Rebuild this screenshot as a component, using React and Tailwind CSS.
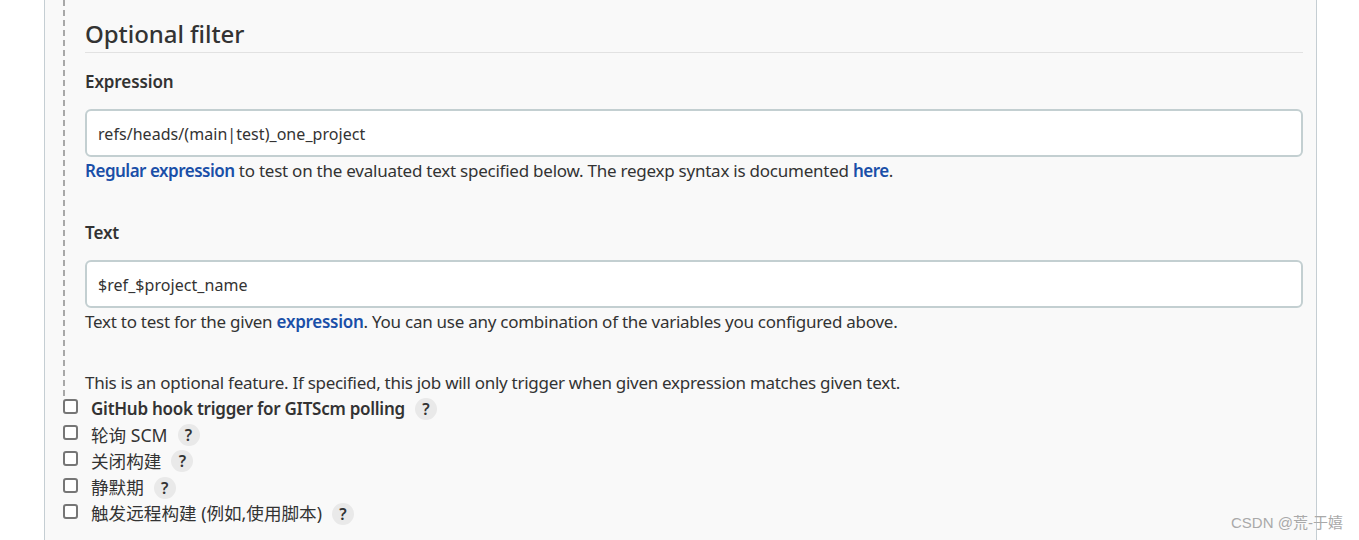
const font = { fontFamily: '"Noto Sans", "Noto Sans CJK SC", sans-serif' };

function HelpBadge() {
  return (
    <span className="ml-[10px] flex h-[22px] w-[22px] items-center justify-center rounded-full bg-[#e9e9e9] text-[16px] font-semibold text-[#333]">?</span>
  );
}

function TriggerRow({ label, bold }) {
  return (
    <div className="flex h-[26.2px] items-center">
      <input type="checkbox" className="mb-[5px] h-[15px] w-[15px] appearance-none rounded-[3px] border-2 border-[#767676] bg-white" />
      <span className={`ml-[13px] text-[#333] ${bold ? "text-[17px] font-semibold tracking-[-0.26px]" : "mb-[1px] text-[17.6px]"}`}>{label}</span>
      <HelpBadge />
    </div>
  );
}

function Field({ label, value, children, helpClass }) {
  return (
    <div>
      <div className="flex h-[20px] items-center text-[17px] font-semibold tracking-[-0.1px] text-[#333]">{label}</div>
      <div className="mt-[17px] flex h-[48px] items-center rounded-[6px] border-2 border-[#c3cfd1] bg-white pl-[11px] pt-[2px] text-[16px] tracking-[0.05px] text-[#333]">{value}</div>
      <div className={`mt-[4px] flex h-[20px] items-center text-[17px] text-[#333] ${helpClass}`}>
        <span>{children}</span>
      </div>
    </div>
  );
}

export default function App() {
  return (
    <div className="relative h-[540px] w-[1359px] overflow-hidden bg-white" style={font}>
      <div className="ml-[44px] h-full w-[1273px] border-x border-[#c5ced3] bg-[#f9f9f9] pl-[18px] pr-[13px]">
        <div className="h-[396px] border-l-2 border-dashed border-[#a8a8a8] pl-[20px]">
          <div className="flex h-[53px] items-end border-b border-[#e2e2e2] text-[24px] font-medium leading-[36px] tracking-[-0.05px] text-[#333]">Optional filter</div>
          <div className="h-[19px]" />
          <Field label="Expression" value="refs/heads/(main|test)_one_project" helpClass="tracking-[-0.24px]">
            <a className="font-semibold tracking-[-0.5px] text-[#1a4fa8]">Regular expression</a> to test on the evaluated text specified below. The regexp syntax is documented <a className="font-semibold tracking-[-0.5px] text-[#1a4fa8]">here</a>.
          </Field>
          <div className="h-[42px]" />
          <Field label="Text" value="$ref_$project_name" helpClass="tracking-[-0.26px]">
            Text to test for the given <a className="font-semibold text-[#1a4fa8]">expression</a>. You can use any combination of the variables you configured above.
          </Field>
          <div className="mt-[41px] flex h-[20px] items-center text-[17px] tracking-[-0.28px] text-[#333]">This is an optional feature. If specified, this job will only trigger when given expression matches given text.</div>
        </div>
        <TriggerRow label="GitHub hook trigger for GITScm polling" bold />
        <TriggerRow label="轮询 SCM" />
        <TriggerRow label="关闭构建" />
        <TriggerRow label="静默期" />
        <TriggerRow label="触发远程构建 (例如,使用脚本)" />
      </div>
      <div className="absolute left-[1231px] top-[513px] text-[15px] leading-[20px] text-[#a9a9a9]" style={{ fontFamily: '"Liberation Sans", "Noto Sans CJK SC", sans-serif' }}>CSDN @荒-于嬉</div>
    </div>
  );
}
